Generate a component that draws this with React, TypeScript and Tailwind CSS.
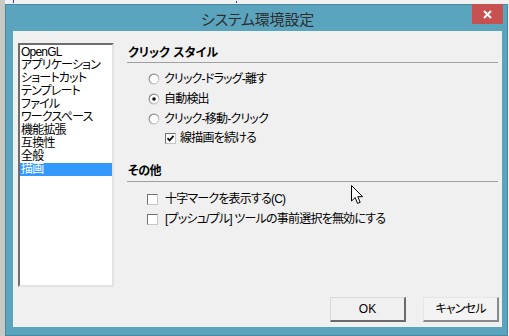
import React from "react";

const ui = "font-['Liberation_Sans','Noto_Sans_CJK_JP',sans-serif] [font-feature-settings:'palt']";

function Radio({ checked }: { checked?: boolean }) {
  return (
    <svg width="12" height="12" viewBox="0 0 12 12" className="shrink-0">
      <defs>
        <linearGradient id={checked ? "rg1" : "rg0"} x1="0" y1="0" x2="1" y2="1">
          <stop offset="0" stopColor="#6f6f6f" />
          <stop offset="0.5" stopColor="#a8a8a8" />
          <stop offset="1" stopColor="#e6e6e6" />
        </linearGradient>
      </defs>
      <circle cx="6" cy="6" r="5.5" fill={`url(#${checked ? "rg1" : "rg0"})`} />
      <circle cx="6" cy="6" r="4.3" fill="#fff" />
      {checked && <circle cx="6" cy="6" r="1.8" fill="#111" />}
    </svg>
  );
}

function Check({ checked }: { checked?: boolean }) {
  return (
    <div className="w-[11px] h-[11px] shrink-0 border border-t-[#707070] border-l-[#707070] border-r-[#c8c8c8] border-b-[#c8c8c8] bg-white flex items-center justify-center">
      {checked && (
        <svg width="9" height="9" viewBox="0 0 9 9">
          <path d="M1.5 4.2 L3.6 6.4 L7.6 1.8" stroke="#111" strokeWidth="1.8" fill="none" />
        </svg>
      )}
    </div>
  );
}

const items = [
  "OpenGL",
  "アプリケーション",
  "ショートカット",
  "テンプレート",
  "ファイル",
  "ワークスペース",
  "機能拡張",
  "互換性",
  "全般",
  "描画",
];

export default function App() {
  return (
    <div className={`w-[509px] h-[336px] bg-[#f1f1f1] flex relative overflow-hidden text-black ${ui}`}>
      {/* tiny marks above the window */}
      <div className="absolute left-[13px] top-0 w-px h-[3px] bg-[#2a3cff]" />
      <div className="absolute left-[236px] top-[1px] w-px h-[2px] bg-[#2a3cff]" />

      <div className="w-[5px] h-full bg-[#c9c9c4] shrink-0" />

      <div className="flex flex-col pt-[4px]">
        <div className="w-[503px] h-[332px] border border-[#4888a0] bg-[#5aa4be] pl-[7px] pr-[5px] pb-[7px] flex flex-col relative">
          {/* title bar */}
          <div className="h-[26px] flex items-center justify-center pt-[3px]">
            <span className="text-[15px] text-[#2e2e2e] font-['Noto_Sans_CJK_JP',sans-serif] tracking-[-0.2px]">
              システム環境設定
            </span>
          </div>
          <div className="absolute right-[4px] top-[-1px] w-[31px] h-[20px] bg-[#c75050] flex items-center justify-center">
            <svg width="9" height="9" viewBox="0 0 9 9">
              <path d="M1 1 L8 8 M8 1 L1 8" stroke="#fff" strokeWidth="2" />
            </svg>
          </div>

          {/* client */}
          <div className="w-[489px] h-[296px] bg-[#f0f0f0] flex flex-col pt-[12px]">
            <div className="flex h-[244px] pl-[5px]">
              <div className="w-[96px] h-[244px] border-2 border-t-[#6d6d6d] border-l-[#6d6d6d] border-r-[#e3e3e3] border-b-[#e3e3e3] bg-white pt-[1px] text-[12px] leading-[13px] tracking-[-0.8px]">
                {items.map((it) => (
                  <div
                    key={it}
                    className={`h-[13px] pl-[1px] whitespace-nowrap ${it === "描画" ? "bg-[#3399ff] text-white" : ""}`}
                  >
                    {it}
                  </div>
                ))}
              </div>

              <div className="ml-[13px] w-[371px] flex flex-col text-[12px] tracking-[-0.8px]">
                <div className="h-[20px] border-b border-[#a0a0a0] flex items-center pl-[1px] font-bold tracking-normal">
                  クリック スタイル
                </div>
                <div className="mt-[6px] flex flex-col">
                  <div className="h-[20px] flex items-center gap-[4px] pl-[21px]">
                    <Radio />
                    <span>クリック-ドラッグ-離す</span>
                  </div>
                  <div className="h-[20px] flex items-center gap-[4px] pl-[21px]">
                    <Radio checked />
                    <span>自動検出</span>
                  </div>
                  <div className="h-[19px] flex items-center gap-[4px] pl-[21px]">
                    <Radio />
                    <span>クリック-移動-クリック</span>
                  </div>
                  <div className="h-[20px] flex items-center gap-[4px] pl-[38px]">
                    <Check checked />
                    <span>線描画を続ける</span>
                  </div>
                </div>

                <div className="mt-[13px] h-[21px] border-b border-[#a0a0a0] flex items-center pl-[1px] font-bold tracking-[-0.5px]">
                  その他
                </div>
                <div className="mt-[7px] flex flex-col">
                  <div className="h-[20px] flex items-center gap-[7px] pl-[20px]">
                    <Check />
                    <span>十字マークを表示する(C)</span>
                  </div>
                  <div className="h-[20px] flex items-center gap-[7px] pl-[20px]">
                    <Check />
                    <span>[プッシュ/プル] ツールの事前選択を無効にする</span>
                  </div>
                </div>
              </div>
            </div>

            <div className="mt-[10px] flex justify-end gap-[17px] pr-[3px] text-[12px]">
              <button className="w-[76px] h-[25px] bg-[#f0f0f0] border border-t-[#d8d8d8] border-l-[#d8d8d8] border-r-2 border-b-2 border-r-[#6a6a6a] border-b-[#6a6a6a] flex items-center justify-center">
                OK
              </button>
              <button className="w-[76px] h-[25px] bg-[#f3f3f3] border border-t-[#e6e6e6] border-l-[#e6e6e6] border-r-2 border-b-2 border-r-[#8a8a8a] border-b-[#8a8a8a] flex items-center justify-center tracking-[-0.8px]">
                キャンセル
              </button>
            </div>
          </div>
        </div>
      </div>

      {/* mouse cursor */}
      <svg className="absolute left-[351px] top-[185px]" width="13" height="20" viewBox="0 0 13 20">
        <path d="M0.5 0.5 L0.5 16 L4.2 12.6 L6.6 18.4 L9.2 17.3 L6.8 11.7 L11.6 11.7 Z" fill="#fff" stroke="#000" strokeWidth="1" strokeLinejoin="miter" />
      </svg>
    </div>
  );
}
